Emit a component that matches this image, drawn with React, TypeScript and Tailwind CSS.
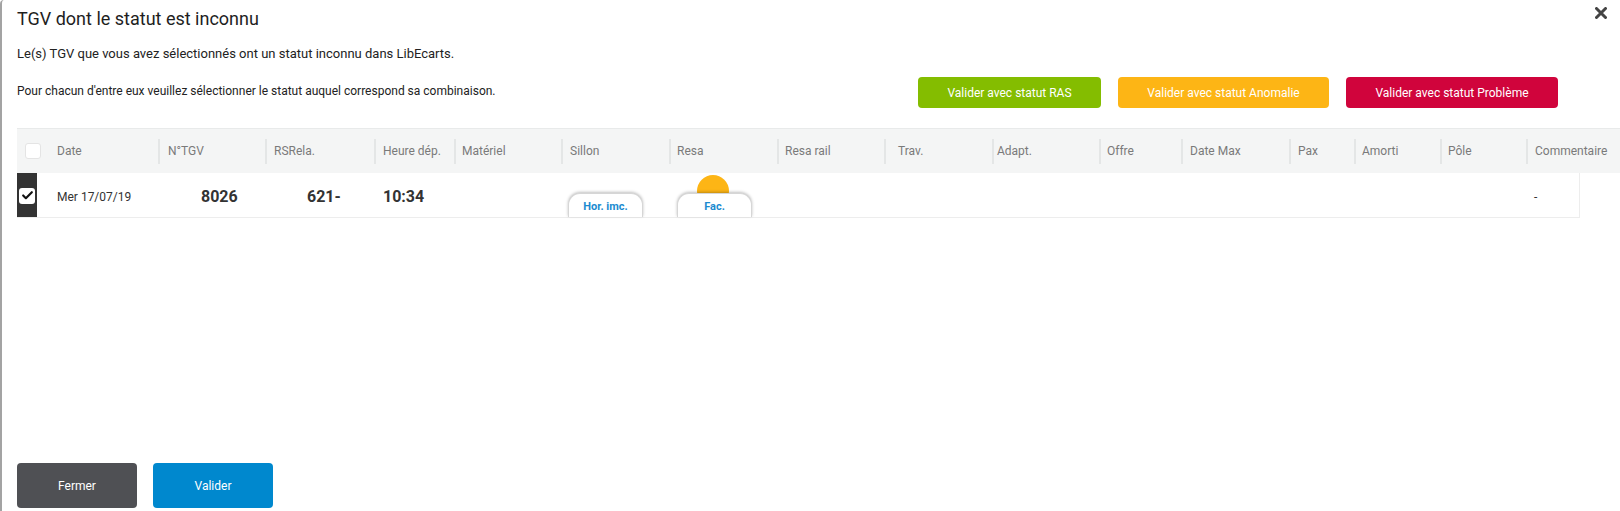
import { Check } from 'lucide-react';

const headerCols = [
  { label: 'N°TGV', w: 'w-[107px]', pl: 'pl-[8px]' },
  { label: 'RSRela.', w: 'w-[109px]', pl: 'pl-[7px]' },
  { label: 'Heure dép.', w: 'w-[80px]', pl: 'pl-[7px]' },
  { label: 'Matériel', w: 'w-[107px]', pl: 'pl-[6px]' },
  { label: 'Sillon', w: 'w-[108px]', pl: 'pl-[7px]' },
  { label: 'Resa', w: 'w-[108px]', pl: 'pl-[6px]' },
  { label: 'Resa rail', w: 'w-[107px]', pl: 'pl-[6px]' },
  { label: 'Trav.', w: 'w-[108px]', pl: 'pl-[12px]' },
  { label: 'Adapt.', w: 'w-[107px]', pl: 'pl-[3px]' },
  { label: 'Offre', w: 'w-[82px]', pl: 'pl-[6px]' },
  { label: 'Date Max', w: 'w-[108px]', pl: 'pl-[7px]' },
  { label: 'Pax', w: 'w-[65px]', pl: 'pl-[7px]' },
  { label: 'Amorti', w: 'w-[86px]', pl: 'pl-[6px]' },
  { label: 'Pôle', w: 'w-[86px]', pl: 'pl-[6px]' },
];

function Pill({ label, dot }: { label: string; dot?: boolean }) {
  return (
    <div className="relative w-[75px] h-[24px]">
      {dot && (
        <span className="absolute left-[20px] top-[-18px] w-[32px] h-[32px] rounded-full bg-[#fdb515]" />
      )}
      <div className="relative flex items-start justify-center pt-[5px] w-full h-full bg-white rounded-t-[12px] border border-b-0 border-[#d6d6d6] shadow-[0_-1px_3px_rgba(0,0,0,0.25)] text-[11px] font-bold text-[#1b8bd0]">
        {label}
      </div>
    </div>
  );
}

export default function App() {
  return (
    <div className="w-full h-[511px] bg-white border-l-2 border-[#a3a3a3] rounded-tl-[4px] flex flex-col overflow-hidden font-['Roboto','Liberation_Sans',sans-serif] text-[#333]">
      <div className="flex justify-between pl-[15px] pr-[13px]">
        <h1 className="pt-[8px] text-[18px] leading-[21px] text-[#1e1e1e]">TGV dont le statut est inconnu</h1>
        <svg className="mt-[7px]" width="12" height="12" viewBox="0 0 12 12">
          <path d="M1.5 1.5 L10.5 10.5 M10.5 1.5 L1.5 10.5" stroke="#444" strokeWidth="3" strokeLinecap="round" />
        </svg>
      </div>

      <p className="ml-[15px] mt-[17px] text-[13px] leading-[16px] text-[#222]">
        Le(s) TGV que vous avez sélectionnés ont un statut inconnu dans LibEcarts.
      </p>

      <div className="flex items-start mt-[15px] ml-[15px]">
        <p className="mt-[6px] text-[12px] leading-[16px] text-[#222]">
          Pour chacun d'entre eux veuillez sélectionner le statut auquel correspond sa combinaison.
        </p>
        <div className="ml-auto mr-[62px] flex gap-[17px] text-[12px] text-white">
          <button className="w-[183px] h-[31px] rounded-[4px] bg-[#84bd00]">Valider avec statut RAS</button>
          <button className="w-[211px] h-[31px] rounded-[4px] bg-[#fdb515]">Valider avec statut Anomalie</button>
          <button className="w-[212px] h-[31px] rounded-[4px] bg-[#d0043c]">Valider avec statut Problème</button>
        </div>
      </div>

      <div className="mt-[20px] ml-[15px] flex h-[45px] items-center bg-[#f4f5f5] border-t border-[#e8eaea] text-[12px] text-[#7a7a7a]">
        <div className="w-[141px] flex items-center">
          <span className="ml-[8px] w-4 h-4 rounded-[3px] bg-white border border-[#e4e4e4]" />
          <span className="ml-[16px]">Date</span>
        </div>
        {headerCols.map((c) => (
          <div key={c.label} className={`${c.w} flex items-center`}>
            <span className="w-[2px] h-[25px] bg-[#e4e6e6]" />
            <span className={c.pl}>{c.label}</span>
          </div>
        ))}
        <div className="flex-1 flex items-center">
          <span className="w-[2px] h-[25px] bg-[#e4e6e6]" />
          <span className="pl-[7px]">Commentaire</span>
        </div>
      </div>

      <div className="ml-[15px] w-[1563px] flex h-[45px] border-b border-r border-[#ededed]">
        <div className="w-[20px] bg-[#333] flex items-center pt-[1px]">
          <span className="ml-[2px] w-4 h-4 rounded-[3px] bg-white flex items-center justify-center">
            <Check size={13} strokeWidth={4} color="#111" />
          </span>
        </div>
        <div className="w-[121px] flex items-center pt-[3px] pl-[20px] text-[12px]">Mer 17/07/19</div>
        <div className="w-[107px] flex items-center pt-[3px] pl-[43px] text-[16px] font-bold">8026</div>
        <div className="w-[109px] flex items-center pt-[3px] pl-[42px] text-[16px] font-bold">621-</div>
        <div className="w-[80px] flex items-center pt-[3px] pl-[9px] text-[16px] font-bold">10:34</div>
        <div className="w-[107px]" />
        <div className="w-[108px] flex items-end pl-[7px]">
          <Pill label="Hor. imc." />
        </div>
        <div className="w-[108px] flex items-end pl-[8px]">
          <Pill label="Fac." dot />
        </div>
        <div className="w-[107px]" />
        <div className="w-[108px]" />
        <div className="w-[107px]" />
        <div className="w-[82px]" />
        <div className="w-[108px]" />
        <div className="w-[65px]" />
        <div className="w-[86px]" />
        <div className="w-[86px]" />
        <div className="flex-1 flex items-center pt-[3px] pl-[8px] text-[12px]">-</div>
      </div>

      <div className="mt-auto mb-[3px] ml-[15px] flex gap-[16px] text-[12px] text-white">
        <button className="w-[120px] h-[45px] rounded-[4px] bg-[#4f5054]">Fermer</button>
        <button className="w-[120px] h-[45px] rounded-[4px] bg-[#0088ce]">Valider</button>
      </div>
    </div>
  );
}
